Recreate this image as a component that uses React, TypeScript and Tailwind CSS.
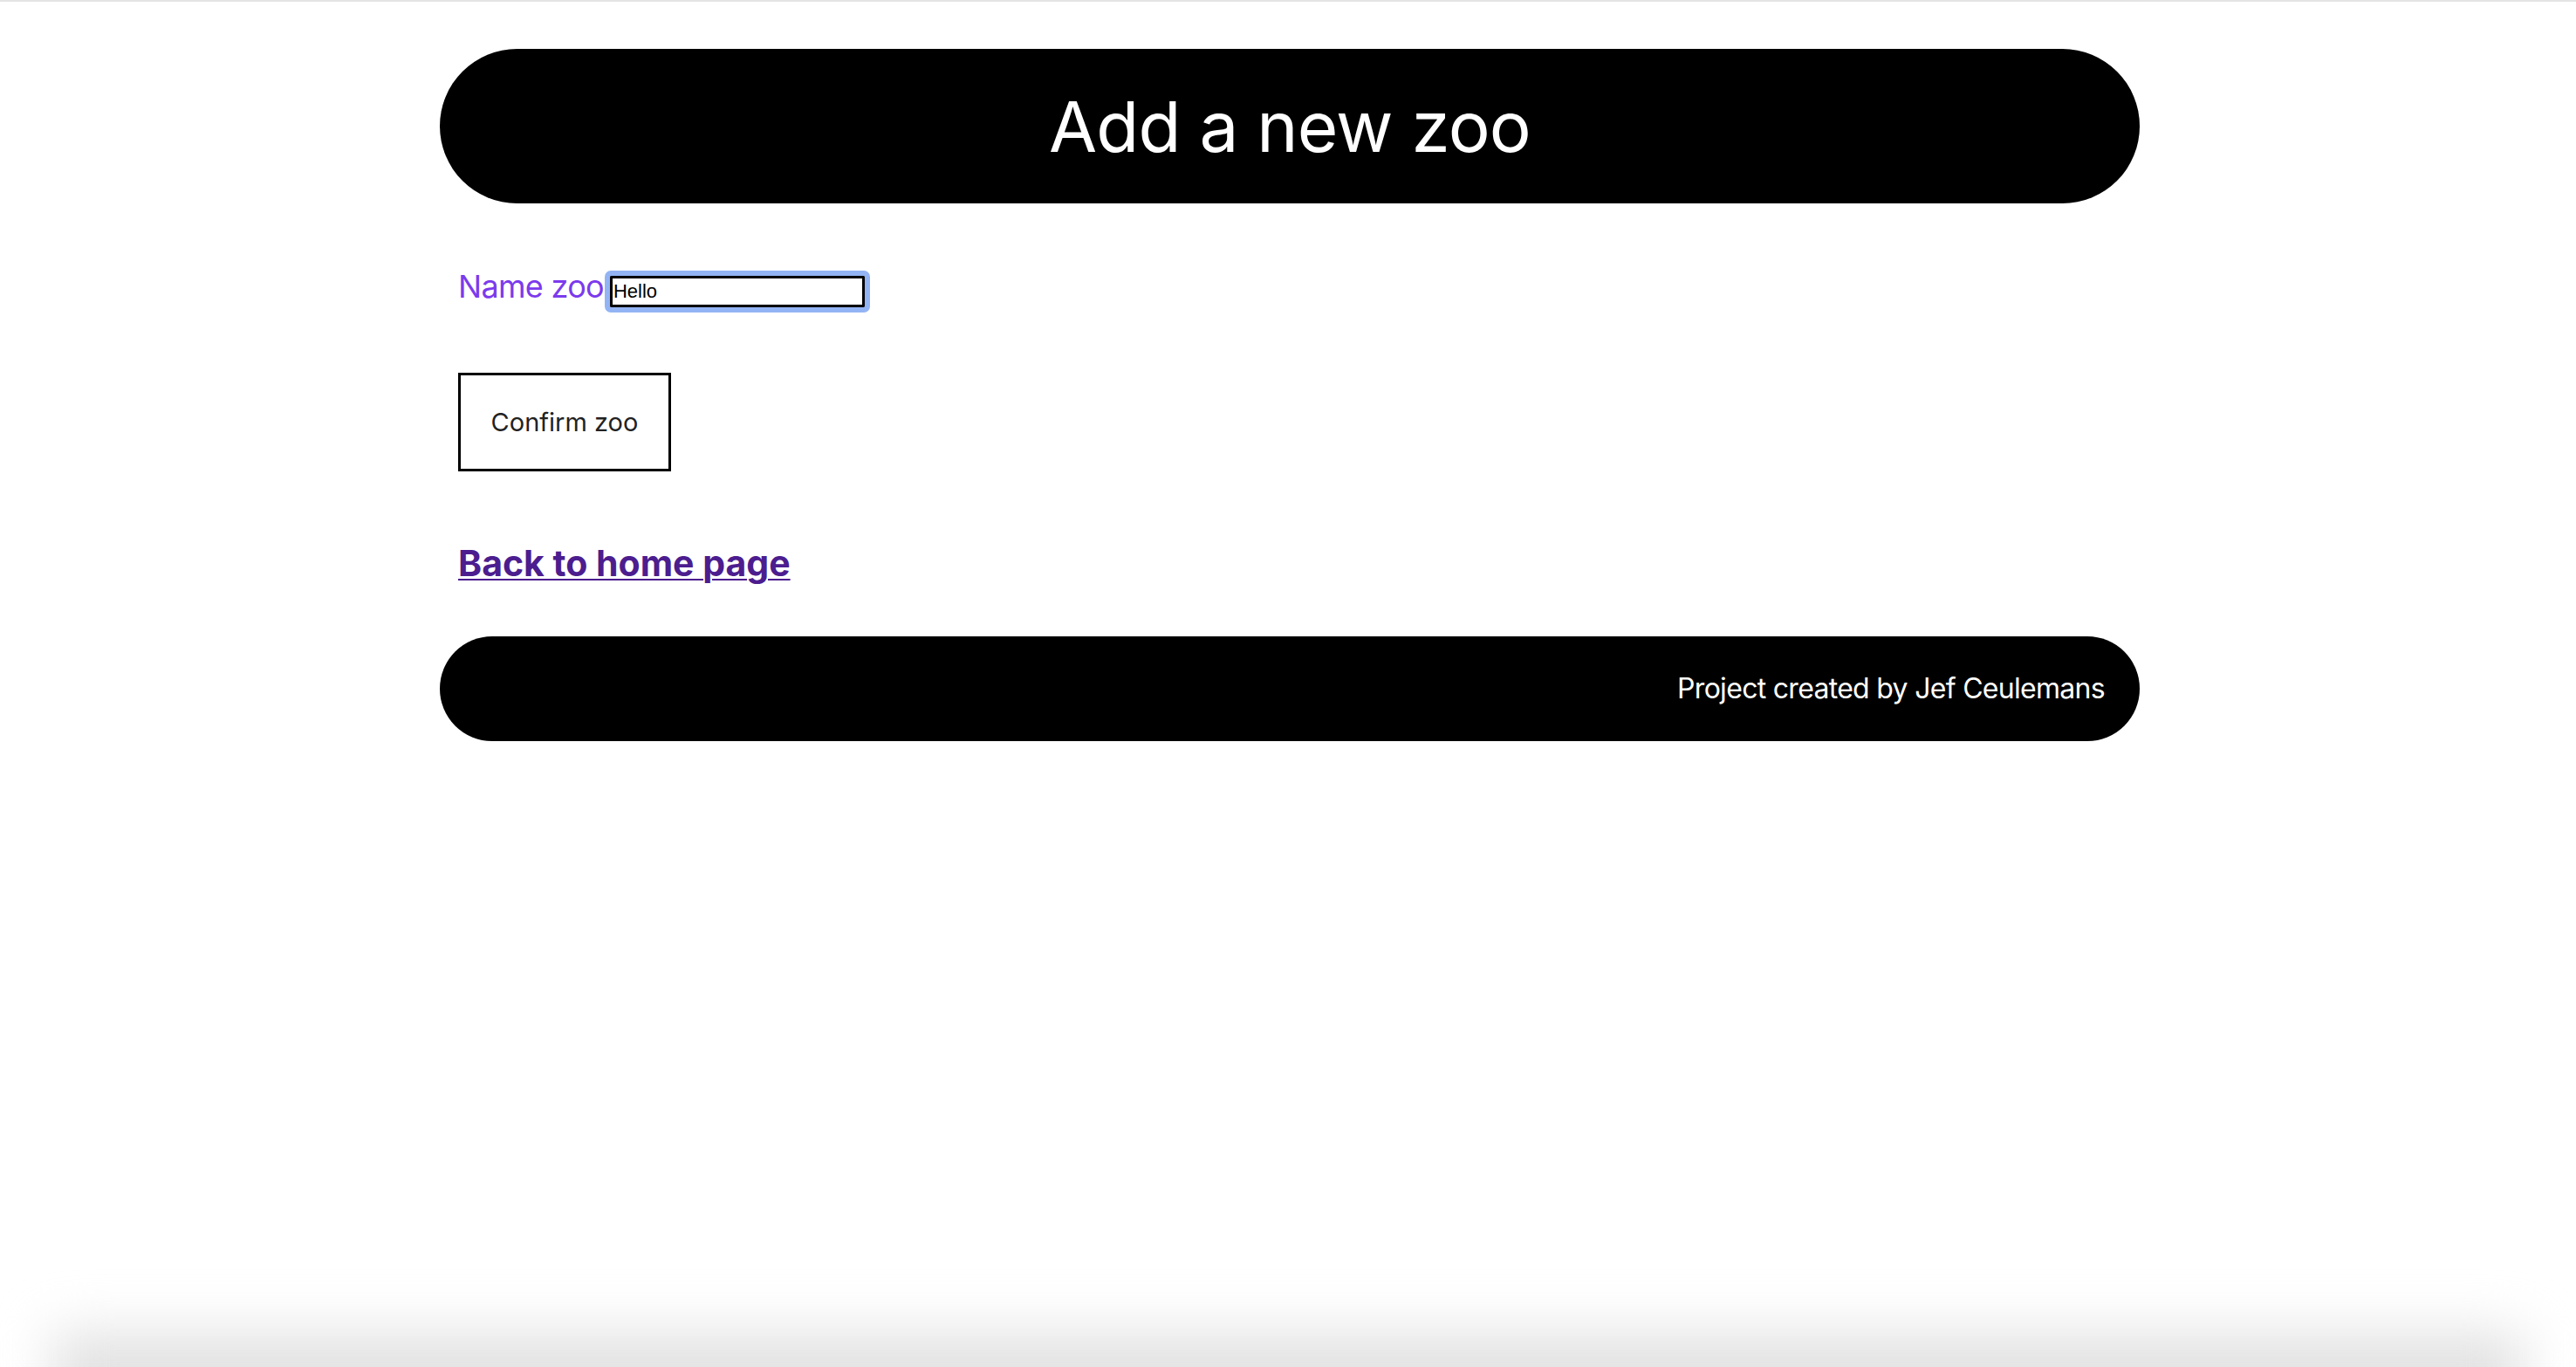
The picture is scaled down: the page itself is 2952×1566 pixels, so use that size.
export default function App() {
  return (
    <div className="relative min-h-screen overflow-hidden bg-white font-['Inter','Noto_Sans',sans-serif]">
      {/* thin browser line at the top */}
      <div className="h-[2px] w-full bg-[#e4e4e4]" />

      <div className="ml-[504px] w-[1948px] pt-[54px]">
        {/* Header */}
        <header className="flex h-[177px] items-center justify-center rounded-full bg-black">
          <h1 className="text-[80px] leading-none font-normal text-white tracking-[-0.8px]">Add a new zoo</h1>
        </header>

        {/* Form */}
        <div className="pl-[21px]">
          <div className="mt-[77px] flex items-baseline">
            <label htmlFor="zooName" className="text-[36px] leading-none tracking-[-0.7px] text-[#7c3aed]">
              Name zoo
            </label>
            <input
              id="zooName"
              type="text"
              defaultValue="Hello"
              className="ml-[7px] h-[36px] w-[292px] rounded-[1px] border-[3px] border-black bg-white px-[1px] font-['Liberation_Sans',Arial,sans-serif] text-[22px] text-black outline-[6px] outline-[#93b4f4]"
            />
          </div>

          <button className="mt-[75px] flex h-[113px] w-[244px] items-center justify-center border-[3px] border-black bg-white text-[29px] leading-none text-[#222222]">
            Confirm zoo
          </button>

          <a
            href="#"
            className="mt-[85px] inline-block text-[41px] leading-none font-bold text-[#4c1d8f] underline decoration-[2px] underline-offset-[3px]"
          >
            Back to home page
          </a>
        </div>

        {/* Footer */}
        <footer className="mt-[63px] flex h-[120px] items-center justify-end rounded-full bg-black pr-[40px]">
          <p className="text-[32px] leading-none tracking-[-0.7px] text-white">Project created by Jef Ceulemans</p>
        </footer>
      </div>

      {/* window shadow at the bottom edge */}
      <div className="pointer-events-none absolute bottom-[-60px] left-[60px] right-[60px] h-[100px] bg-[#e2e2e2] blur-[30px]" />
    </div>
  );
}
